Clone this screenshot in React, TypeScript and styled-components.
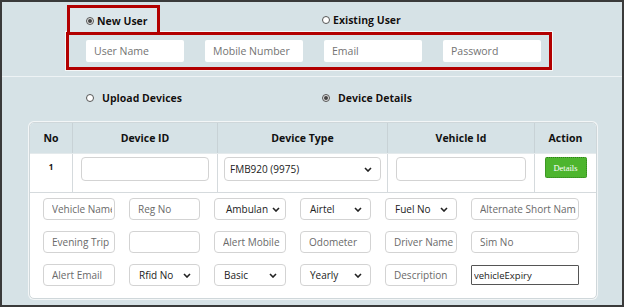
import React from 'react';
import styled, { createGlobalStyle } from 'styled-components';

const GlobalStyle = createGlobalStyle`
  body {
    margin: 0;
    font-family: 'Open Sans', 'Liberation Sans', sans-serif;
  }
  * {
    box-sizing: border-box;
  }
`;

const StyledFrame = styled.div`
  width: 624px;
  height: 307px;
  border: 2px solid #3a3a3a;
  background: #d6e2e6;
  overflow: hidden;
  display: flex;
  flex-direction: column;
`;

const StyledTopSection = styled.div`
  height: 75px;
  padding: 3px 0 0 65px;
  border-bottom: 1px solid #eef3f5;
`;

const StyledTabRow = styled.div`
  display: flex;
  align-items: center;
`;

const StyledTab = styled.div`
  width: 93px;
  height: 27px;
  border: 3px solid #b20000;
  border-bottom: 0;
  background: #dce6ea;
  display: flex;
  align-items: center;
  padding: 2px 0 0 16px;
`;

const StyledExisting = styled.div`
  margin-left: 162px;
  padding-top: 3px;
`;

const StyledInputBox = styled.div`
  width: 486px;
  height: 38px;
  margin-left: -1px;
  border: 3px solid #b20000;
  box-shadow: 0 0 0 1px #f4f7f8;
  display: flex;
  align-items: center;
  gap: 21px;
  padding: 0 0 0 17px;
`;

const StyledTopInput = styled.input`
  width: 98px;
  height: 22px;
  border: 0;
  border-radius: 2px;
  background: #fff;
  padding: 0 8px;
  font-family: 'Open Sans', 'Liberation Sans', sans-serif;
  font-size: 10.5px;
  color: #333;
  &::placeholder {
    color: #737373;
  }
`;

const StyledRadioLabel = styled.label<{ $gap?: number }>`
  display: flex;
  align-items: center;
  gap: ${({ $gap }) => $gap ?? 3}px;
  font-size: 10.5px;
  font-weight: 700;
  color: #111;
  text-shadow: 0 0 1px #fff;
  white-space: nowrap;
`;

const StyledRadio = styled.span<{ $checked?: boolean }>`
  width: 8px;
  height: 8px;
  border-radius: 50%;
  border: 1px solid #555;
  background: ${({ $checked }) => ($checked ? '#e4e4e4' : '#fff')};
  display: grid;
  place-items: center;
  &::after {
    content: '';
    width: 4px;
    height: 4px;
    border-radius: 50%;
    background: ${({ $checked }) => ($checked ? '#444' : 'transparent')};
  }
`;

const StyledDeviceSection = styled.div`
  padding: 14px 0 0 27px;
`;

const StyledRadioRow = styled.div`
  display: grid;
  grid-template-columns: 236px auto;
  padding-left: 57px;
  height: 14px;
  align-items: center;
`;

const StyledCard = styled.div`
  margin-top: 17px;
  width: 568px;
  height: 177px;
  border: 1px solid #cfd7da;
  border-radius: 5px;
  box-shadow: 0 0 0 1px #f3f6f7;
  background: #fff;
  overflow: hidden;
`;

const StyledTableRow = styled.div<{ $header?: boolean }>`
  display: grid;
  grid-template-columns: 43px 145px 170px 147px 61px;
  height: ${({ $header }) => ($header ? 31 : 39)}px;
  background: ${({ $header }) => ($header ? '#d6e2e6' : '#fff')};
  border-bottom: 1px solid ${({ $header }) => ($header ? '#e4eaec' : '#d5dadd')};
`;

const StyledHeadCell = styled.div`
  display: grid;
  place-items: center;
  font-size: 10.5px;
  font-weight: 700;
  color: #111;
  border-right: 1px solid #c8d2d6;
  &:last-child {
    border-right: 0;
  }
`;

const StyledCell = styled.div<{ $px?: number }>`
  padding: 3px ${({ $px }) => $px ?? 8}px 0;
  border-right: 1px solid #d5dadd;
  display: flex;
  justify-content: center;
  align-items: flex-start;
  &:last-child {
    border-right: 0;
  }
`;

const StyledNumber = styled.span`
  font-size: 8px;
  font-weight: 700;
  color: #111;
  margin-top: 4px;
`;

const StyledField = styled.input<{ $h?: number }>`
  width: 100%;
  height: ${({ $h }) => $h ?? 22}px;
  border: 1px solid #d3d3d3;
  border-radius: 4px;
  background: #fff;
  padding: 0 2px 0 8px;
  font-family: 'Open Sans', 'Liberation Sans', sans-serif;
  font-size: 10px;
  color: #222;
  outline: none;
  &::placeholder {
    color: #6a6a6a;
  }
`;

const StyledExpiry = styled.input`
  width: 100%;
  height: 20px;
  margin-top: 1px;
  border: 1px solid #555;
  border-radius: 1px;
  background: #fff;
  padding: 0 2px;
  font-family: 'Open Sans', 'Liberation Sans', sans-serif;
  font-size: 9.5px;
  color: #222;
  outline: none;
`;

const StyledSelect = styled.div<{ $h?: number; $pl?: number }>`
  width: 100%;
  height: ${({ $h }) => $h ?? 22}px;
  border: 1px solid #d3d3d3;
  border-radius: 4px;
  background: #fff;
  padding: 0 8px 0 ${({ $pl }) => $pl ?? 9}px;
  display: flex;
  align-items: center;
  gap: 4px;
  font-size: 10px;
  color: #222;
  white-space: nowrap;
  span {
    flex: 1;
  }
  svg {
    flex: none;
  }
`;

const StyledDetailsButton = styled.button`
  width: 42px;
  height: 21px;
  border: 1px dotted #2f7d1c;
  border-radius: 2px;
  background: #4db52e;
  color: #fff;
  font-family: 'Liberation Serif', serif;
  font-size: 8.5px;
  padding: 0;
`;

const StyledDetailsGrid = styled.div`
  display: grid;
  grid-template-columns: 72px 71px 72px 71px 72px 108px;
  grid-auto-rows: 22px;
  column-gap: 14px;
  row-gap: 11px;
  padding: 5px 0 0 13px;
`;

const Chevron = () => (
  <svg width="8" height="5" viewBox="0 0 8 5">
    <polyline points="1,1 4,4 7,1" fill="none" stroke="#222" strokeWidth="1.6" />
  </svg>
);

const Select = ({ label, pl, h }: { label: string; pl?: number; h?: number }) => (
  <StyledSelect $pl={pl} $h={h}>
    <span>{label}</span>
    <Chevron />
  </StyledSelect>
);

export default function App() {
  return (
    <>
      <GlobalStyle />
      <StyledFrame>
        <StyledTopSection>
          <StyledTabRow>
            <StyledTab>
              <StyledRadioLabel>
                <StyledRadio $checked />
                New User
              </StyledRadioLabel>
            </StyledTab>
            <StyledExisting>
              <StyledRadioLabel>
                <StyledRadio />
                Existing User
              </StyledRadioLabel>
            </StyledExisting>
          </StyledTabRow>
          <StyledInputBox>
            <StyledTopInput placeholder="User Name" />
            <StyledTopInput placeholder="Mobile Number" />
            <StyledTopInput placeholder="Email" />
            <StyledTopInput placeholder="Password" />
          </StyledInputBox>
        </StyledTopSection>
        <StyledDeviceSection>
          <StyledRadioRow>
            <StyledRadioLabel $gap={8}>
              <StyledRadio />
              Upload Devices
            </StyledRadioLabel>
            <StyledRadioLabel $gap={8}>
              <StyledRadio $checked />
              Device Details
            </StyledRadioLabel>
          </StyledRadioRow>
          <StyledCard>
            <StyledTableRow $header>
              <StyledHeadCell>No</StyledHeadCell>
              <StyledHeadCell>Device ID</StyledHeadCell>
              <StyledHeadCell>Device Type</StyledHeadCell>
              <StyledHeadCell>Vehicle Id</StyledHeadCell>
              <StyledHeadCell>Action</StyledHeadCell>
            </StyledTableRow>
            <StyledTableRow>
              <StyledCell>
                <StyledNumber>1</StyledNumber>
              </StyledCell>
              <StyledCell>
                <StyledField $h={24} />
              </StyledCell>
              <StyledCell $px={6}>
                <Select label="FMB920 (9975)" pl={5} h={24} />
              </StyledCell>
              <StyledCell>
                <StyledField $h={24} />
              </StyledCell>
              <StyledCell>
                <StyledDetailsButton>Details</StyledDetailsButton>
              </StyledCell>
            </StyledTableRow>
            <StyledDetailsGrid>
              <StyledField placeholder="Vehicle Name" />
              <StyledField placeholder="Reg No" />
              <Select label="Ambulan" pl={11} />
              <Select label="Airtel" />
              <Select label="Fuel No" />
              <StyledField placeholder="Alternate Short Name" />
              <StyledField placeholder="Evening Trip" />
              <StyledField />
              <StyledField placeholder="Alert Mobile" />
              <StyledField placeholder="Odometer" />
              <StyledField placeholder="Driver Name" />
              <StyledField placeholder="Sim No" />
              <StyledField placeholder="Alert Email" />
              <Select label="Rfid No" />
              <Select label="Basic" />
              <Select label="Yearly" />
              <StyledField placeholder="Description" />
              <StyledExpiry defaultValue="vehicleExpiry" />
            </StyledDetailsGrid>
          </StyledCard>
        </StyledDeviceSection>
      </StyledFrame>
    </>
  );
}
